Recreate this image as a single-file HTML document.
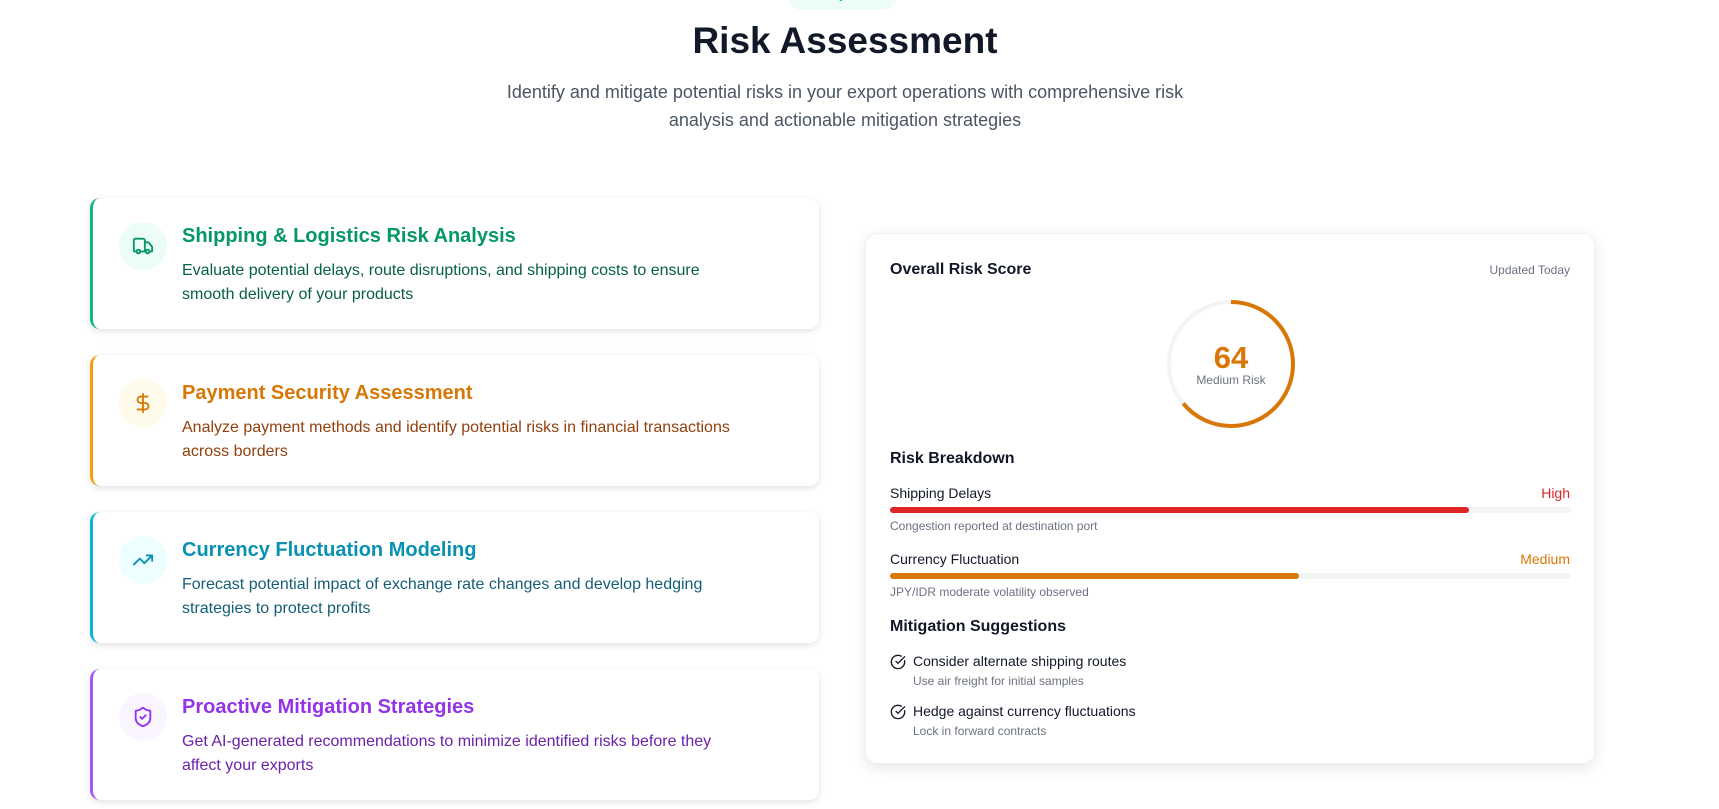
<!DOCTYPE html>
<html><head><style>
*{box-sizing:border-box;margin:0;padding:0}
body{width:1719px;height:809px;overflow:hidden;background:#fff;font-family:"Liberation Sans",sans-serif;position:relative;color:#111827}
.pill{position:absolute;left:787px;top:-22px;width:110px;height:32px;border-radius:16px;background:#ecfdf5;color:#10b981;font-size:14px;text-align:center;line-height:30px}
h1{position:absolute;left:0;width:1690px;text-align:center;top:20px;font-size:37px;font-weight:bold;color:#111827}
.sub{position:absolute;left:490px;width:710px;text-align:center;top:78px;font-size:18px;line-height:28px;color:#4b5563}
.card{position:absolute;left:90px;width:729px;height:131px;background:#fff;border-radius:10px;box-shadow:0 2px 7px rgba(0,0,0,.12);border-left:3px solid}
.ic{position:absolute;left:26px;top:24px;width:48px;height:48px;border-radius:50%;display:flex;align-items:center;justify-content:center}
.ct{position:absolute;left:89px;top:27px;font-size:20px;font-weight:bold}
.cd{position:absolute;left:89px;top:61px;font-size:16px;line-height:24px;width:555px}
.rc{position:absolute;left:865px;top:233px;width:730px;height:531px;border-radius:12px;background:#fff;box-shadow:0 4px 14px rgba(0,0,0,.1);border:1px solid #f1f1f1}
.a{position:absolute}
.bar{position:absolute;left:24px;width:681px;height:6px;border-radius:3px;background:#f3f4f6}
.bar div{height:6px;border-radius:3px}
</style></head><body>
<div class="pill">Safety First</div>
<h1>Risk Assessment</h1>
<div class="sub">Identify and mitigate potential risks in your export operations with comprehensive risk analysis and actionable mitigation strategies</div>

<div class="card" style="top:198px;border-color:#10b981">
<div class="ic" style="background:#ecfdf5"><svg width="22" height="22" viewBox="0 0 24 24" fill="none" stroke="#059669" stroke-width="2" stroke-linecap="round" stroke-linejoin="round"><path d="M14 18V6a2 2 0 0 0-2-2H4a2 2 0 0 0-2 2v11a1 1 0 0 0 1 1h2"/><path d="M15 18H9"/><path d="M19 18h2a1 1 0 0 0 1-1v-3.65a1 1 0 0 0-.22-.62L18.3 8.38A1 1 0 0 0 17.52 8H14"/><circle cx="17" cy="18" r="2"/><circle cx="7" cy="18" r="2"/></svg></div>
<div class="ct" style="color:#059669">Shipping &amp; Logistics Risk Analysis</div>
<div class="cd" style="color:#065f46">Evaluate potential delays, route disruptions, and shipping costs to ensure smooth delivery of your products</div></div>

<div class="card" style="top:355px;border-color:#f59e0b">
<div class="ic" style="background:#fffbeb"><svg width="22" height="22" viewBox="0 0 24 24" fill="none" stroke="#d97706" stroke-width="2" stroke-linecap="round"><path d="M12 2v20"/><path d="M17 5H9.5a3.5 3.5 0 0 0 0 7h5a3.5 3.5 0 0 1 0 7H6"/></svg></div>
<div class="ct" style="color:#d97706">Payment Security Assessment</div>
<div class="cd" style="color:#92400e">Analyze payment methods and identify potential risks in financial transactions across borders</div></div>

<div class="card" style="top:512px;border-color:#06b6d4">
<div class="ic" style="background:#ecfeff"><svg width="22" height="22" viewBox="0 0 24 24" fill="none" stroke="#0891b2" stroke-width="2" stroke-linecap="round" stroke-linejoin="round"><path d="M22 7l-8.5 8.5-5-5L2 17"/><path d="M16 7h6v6"/></svg></div>
<div class="ct" style="color:#0891b2">Currency Fluctuation Modeling</div>
<div class="cd" style="color:#155e75">Forecast potential impact of exchange rate changes and develop hedging strategies to protect profits</div></div>

<div class="card" style="top:669px;border-color:#a855f7">
<div class="ic" style="background:#faf5ff"><svg width="22" height="22" viewBox="0 0 24 24" fill="none" stroke="#9333ea" stroke-width="2" stroke-linecap="round" stroke-linejoin="round"><path d="M20 13c0 5-3.5 7.5-7.66 8.95a1 1 0 0 1-.67-.01C7.5 20.5 4 18 4 13V6a1 1 0 0 1 1-1c2 0 4.5-1.2 6.24-2.72a1.17 1.17 0 0 1 1.52 0C14.51 3.81 17 5 19 5a1 1 0 0 1 1 1z"/><path d="M9 12l2 2 4-4"/></svg></div>
<div class="ct" style="color:#9333ea">Proactive Mitigation Strategies</div>
<div class="cd" style="color:#6b21a8">Get AI-generated recommendations to minimize identified risks before they affect your exports</div></div>

<div class="rc">
<div class="a" style="left:24px;top:27px;font-size:16px;font-weight:bold">Overall Risk Score</div>
<div class="a" style="right:24px;top:29px;font-size:12px;color:#6b7280">Updated Today</div>
<svg class="a" style="left:299px;top:64px" width="132" height="132" viewBox="0 0 132 132"><circle cx="66" cy="66" r="62" fill="none" stroke="#f3f4f6" stroke-width="4"/><circle cx="66" cy="66" r="62" fill="none" stroke="#d97706" stroke-width="4" stroke-dasharray="249.3 400" transform="rotate(-90 66 66)"/></svg>
<div class="a" style="left:299px;width:132px;text-align:center;top:106px;font-size:31px;font-weight:bold;color:#d97706">64</div>
<div class="a" style="left:299px;width:132px;text-align:center;top:139px;font-size:12px;color:#6b7280">Medium Risk</div>
<div class="a" style="left:24px;top:216px;font-size:16px;font-weight:bold">Risk Breakdown</div>
<div class="a" style="left:24px;top:251px;font-size:14px">Shipping Delays</div>
<div class="a" style="right:24px;top:251px;font-size:14px;color:#dc2626">High</div>
<div class="bar" style="top:273px"><div style="width:85%;background:#dc2626"></div></div>
<div class="a" style="left:24px;top:285px;font-size:12px;color:#6b7280">Congestion reported at destination port</div>
<div class="a" style="left:24px;top:317px;font-size:14px">Currency Fluctuation</div>
<div class="a" style="right:24px;top:317px;font-size:14px;color:#d97706">Medium</div>
<div class="bar" style="top:339px"><div style="width:60%;background:#d97706"></div></div>
<div class="a" style="left:24px;top:351px;font-size:12px;color:#6b7280">JPY/IDR moderate volatility observed</div>
<div class="a" style="left:24px;top:384px;font-size:16px;font-weight:bold">Mitigation Suggestions</div>
<svg class="a" style="left:24px;top:420px" width="16" height="16" viewBox="0 0 24 24" fill="none" stroke="#111827" stroke-width="2" stroke-linecap="round"><path d="M21.8 10A10 10 0 1 1 17 3.3"/><path d="M9 11l3 3L22 4"/></svg>
<div class="a" style="left:47px;top:419px;font-size:14px">Consider alternate shipping routes</div>
<div class="a" style="left:47px;top:440px;font-size:12px;color:#6b7280">Use air freight for initial samples</div>
<svg class="a" style="left:24px;top:470px" width="16" height="16" viewBox="0 0 24 24" fill="none" stroke="#111827" stroke-width="2" stroke-linecap="round"><path d="M21.8 10A10 10 0 1 1 17 3.3"/><path d="M9 11l3 3L22 4"/></svg>
<div class="a" style="left:47px;top:469px;font-size:14px">Hedge against currency fluctuations</div>
<div class="a" style="left:47px;top:490px;font-size:12px;color:#6b7280">Lock in forward contracts</div>
</div>
</body></html>
